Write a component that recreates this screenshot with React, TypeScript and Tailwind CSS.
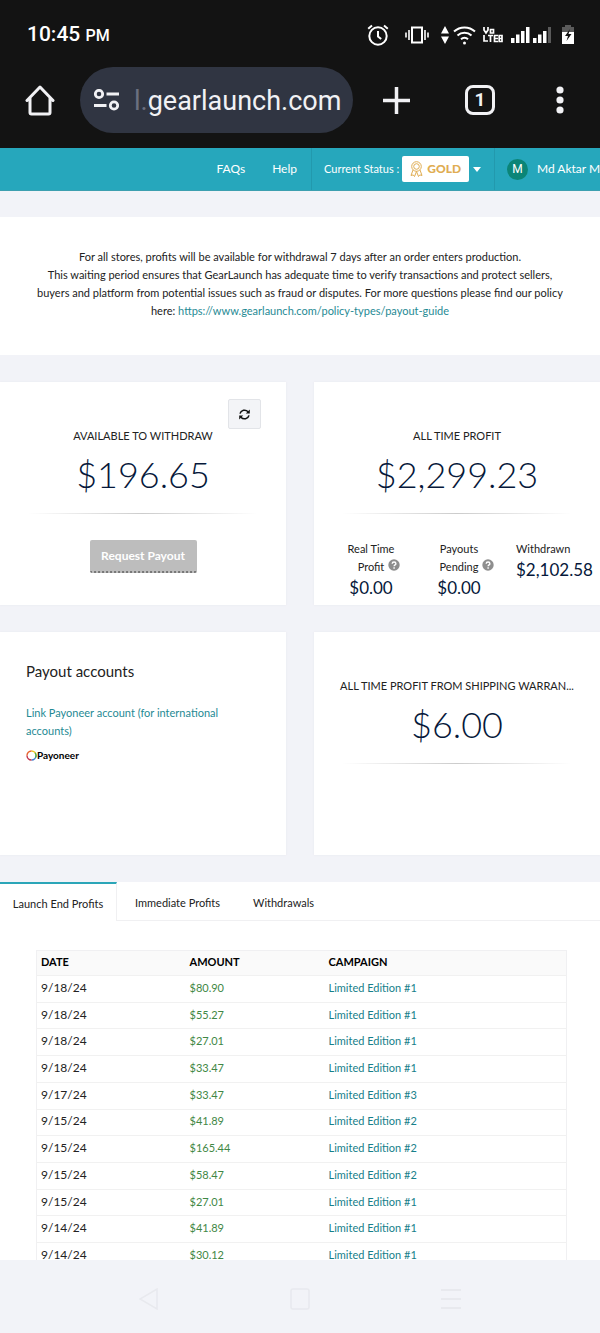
import type { ReactNode } from 'react';

const profits = [
  { date: '9/18/24', amount: '$80.90', campaign: 'Limited Edition #1' },
  { date: '9/18/24', amount: '$55.27', campaign: 'Limited Edition #1' },
  { date: '9/18/24', amount: '$27.01', campaign: 'Limited Edition #1' },
  { date: '9/18/24', amount: '$33.47', campaign: 'Limited Edition #1' },
  { date: '9/17/24', amount: '$33.47', campaign: 'Limited Edition #3' },
  { date: '9/15/24', amount: '$41.89', campaign: 'Limited Edition #2' },
  { date: '9/15/24', amount: '$165.44', campaign: 'Limited Edition #2' },
  { date: '9/15/24', amount: '$58.47', campaign: 'Limited Edition #2' },
  { date: '9/15/24', amount: '$27.01', campaign: 'Limited Edition #1' },
  { date: '9/14/24', amount: '$41.89', campaign: 'Limited Edition #1' },
  { date: '9/14/24', amount: '$30.12', campaign: 'Limited Edition #1' },
];

function StatusBar() {
  return (
    <div className="flex h-[67px] items-center justify-between pl-[27px] pr-[26px] pt-0.5 text-white">
      <p className="text-[21px] font-medium">
        10:45 <span className="text-[16px]">PM</span>
      </p>
      <div className="flex items-center">
        <svg className="mr-4" width="22" height="22" viewBox="0 0 22 22" fill="none" stroke="currentColor" strokeWidth="2">
          <circle cx="11" cy="12" r="8.7" />
          <path d="M11 7v5.5l3.2 2.5M1.2 4.8 5 1.6M20.8 4.8 17 1.6" />
        </svg>
        <svg className="mr-3" width="24" height="18" viewBox="0 0 24 18" fill="none" stroke="currentColor" strokeWidth="2">
          <rect x="7" y="1.5" width="10" height="15" />
          <path d="M4 4v10M20 4v10M1 6.500v5M23 6.500v5" strokeWidth="1.600" />
        </svg>
        <svg className="mr-1" width="8" height="18" viewBox="0 0 8 18" fill="currentColor">
          <path d="M4 0l4 7.500H0zM4 18l4-7.500H0z" />
        </svg>
        <svg className="mr-[7px]" width="23" height="20" viewBox="0 0 23 20" fill="none" stroke="currentColor" strokeWidth="2">
          <path d="M1 6.500a15.500 15.500 0 0 1 21 0M4.500 10.500a10.300 10.300 0 0 1 14 0M8 14.200a5.200 5.200 0 0 1 7 0" />
          <circle cx="11.500" cy="18" r="1.500" fill="currentColor" stroke="none" />
        </svg>
        <svg className="mr-2" width="20" height="17" viewBox="0 0 20 17" fill="none" stroke="currentColor" strokeWidth="1.700">
          <path d="M1 1v3l2 3 2-3V1M7.500 3.500h3v3.500h-3zM1 9v6h4M5 9.500h5M7.500 9.500V16M15 9.500h-3.500v6H15M11.500 12.500H15M16.200 9.500H19v6h-2.800zM16.200 12.500H19" />
        </svg>
        <svg className="mr-[11px]" width="40" height="18" viewBox="0 0 40 18" fill="currentColor">
          <path d="M0 12h3.500v5H0zM5 8.500h3.500V17H5zM10 5h3.500v12H10zM15 1h3.500v16H15zM22 12h3.500v5H22zM27 8.500h3.500V17H27zM32 5h3.500v12H32z" />
          <path d="M37 1h3v16h-3z" fill="#5a5a5a" />
        </svg>
        <svg width="12" height="19" viewBox="0 0 12 19">
          <path d="M3 0h6v2h3v6H0V2h3z" fill="#5a5a5a" />
          <path d="M0 7h12v12H0z" fill="#fff" />
          <path d="M8 4 3 11h3l-1.500 5L9.500 9h-3z" fill="#131313" />
        </svg>
      </div>
    </div>
  );
}

function BrowserToolbar() {
  return (
    <div className="flex items-center pb-[15px] pl-[25px] text-[#f1f1f4]">
      <button type="button" aria-label="Home" className="mr-[25px]">
        <svg width="30" height="32" viewBox="0 0 30 32" fill="none" stroke="currentColor" strokeWidth="3" strokeLinejoin="round" strokeLinecap="round">
          <path d="M2 16.500 15 3l13 13.500M5 14v14.500q0 1.500 1.500 1.500h17q1.500 0 1.500-1.500V14" />
        </svg>
      </button>
      <div className="flex h-[66px] min-w-0 flex-1 items-center rounded-full bg-[#303542] pl-[14px]">
        <svg className="mr-[15px] shrink-0" width="25" height="22" viewBox="0 0 25 22" fill="none" stroke="currentColor" strokeWidth="2.800">
          <circle cx="5" cy="5" r="3.700" />
          <circle cx="20" cy="16.500" r="3.700" />
          <path d="M12.500 5H25M0 16.500h12.500" />
        </svg>
        <p className="whitespace-nowrap pt-0.5 text-[27px]">
          <span className="text-[#6b7080]">l.</span>gearlaunch.com
        </p>
      </div>
      <button type="button" aria-label="New tab" className="flex w-[87px] justify-center">
        <svg width="27" height="27" viewBox="0 0 27 27" stroke="currentColor" strokeWidth="3.500">
          <path d="M13.500 0v27M0 13.500h27" />
        </svg>
      </button>
      <button type="button" aria-label="Tabs" className="flex w-20 justify-center">
        <span className="flex size-[30px] items-center justify-center rounded-lg border-3 border-current text-[19px] font-bold">
          1
        </span>
      </button>
      <button type="button" aria-label="Menu" className="flex w-20 justify-center">
        <svg width="8" height="28" viewBox="0 0 8 28" fill="currentColor">
          <circle cx="4" cy="4" r="3.600" />
          <circle cx="4" cy="14" r="3.600" />
          <circle cx="4" cy="24" r="3.600" />
        </svg>
      </button>
    </div>
  );
}

function SiteHeader() {
  return (
    <header className="flex h-[43px] items-center justify-end overflow-hidden whitespace-nowrap border-b border-[#3d9fb0] bg-[#26a7bc] text-[12px] text-white">
      <a href="#faqs" className="mr-[27px]">FAQs</a>
      <a href="#help" className="mr-[14px]">Help</a>
      <button type="button" className="flex h-full w-[184px] items-center border-x border-[#2299ad] pl-3 text-[11px]">
        Current Status :
        <span className="ml-[3px] flex h-[26px] w-[67px] items-center justify-center gap-1 rounded-xs bg-white text-[12px] font-black text-[#e0ad52]">
          <svg width="13" height="16" viewBox="0 0 13 16" fill="none" stroke="currentColor">
            <circle cx="6.500" cy="5.500" r="4.800" />
            <circle cx="6.500" cy="5.500" r="2.800" />
            <path d="M3 9 1 14.500l2.200-.6L4.500 15.500 6.500 10.500l2 5 1.300-1.600 2.200.6L10 9" />
          </svg>
          GOLD
        </span>
        <svg className="ml-1" width="8" height="5" viewBox="0 0 8 5" fill="currentColor">
          <path d="M0 0h8L4 5z" />
        </svg>
      </button>
      <div className="flex w-[105px] items-center pl-3">
        <span className="mr-[9px] flex size-[21px] shrink-0 items-center justify-center rounded-full bg-[#0b8577] font-['Roboto',sans-serif]">
          M
        </span>
        Md Aktar M
      </div>
    </header>
  );
}

function Card({ children }: { children: ReactNode }) {
  return <section className="relative h-[223px] min-w-0 bg-white shadow-[0_0_2px_#e6e8ee]">{children}</section>;
}

function Total({ label, value }: { label: string; value: string }) {
  return (
    <div className="px-6 pt-[45px] text-center">
      <h2 className="truncate text-[11px] leading-[18px] text-[#222]">{label}</h2>
      <p className="mt-[5px] text-[36px] font-light leading-[48px] text-[#06183a]">{value}</p>
      <div className="mx-1 mt-[15px] h-px bg-linear-to-r from-transparent via-[#ccc] to-transparent" />
    </div>
  );
}

function HelpIcon() {
  return (
    <svg className="ml-1 inline align-baseline" width="12" height="12" viewBox="0 0 12 12">
      <circle cx="6" cy="6" r="5.700" fill="#8e8e8e" />
      <path d="M4.200 4.700C4.200 2.500 7.900 2.500 7.900 4.700 7.900 6 6.100 5.900 6.100 7.300M6.100 8.300v1.400" fill="none" stroke="#fff" strokeWidth="1.400" />
    </svg>
  );
}

function Stat({ first, second, value }: { first: string; second: string; value: string }) {
  return (
    <div className="w-22 text-center">
      <p>{first}</p>
      <p className="h-[18px] whitespace-nowrap pl-4">
        {second}
        <HelpIcon />
      </p>
      <p className="text-[17px] leading-6 text-[#06183a]">{value}</p>
    </div>
  );
}

function PayoneerLogo() {
  return (
    <p className="mt-[7px] flex items-center text-[10px] font-bold leading-4 text-black">
      <svg width="11" height="11" viewBox="0 0 11 11" fill="none" strokeWidth="1.400">
        <path d="M5.500 1A4.500 4.500 0 0 1 10 5.500" stroke="#e8c51c" />
        <path d="M10 5.500A4.500 4.500 0 0 1 5.500 10" stroke="#3f7fd0" />
        <path d="M5.500 10A4.500 4.500 0 0 1 1 5.500" stroke="#c0304a" />
        <path d="M1 5.500A4.500 4.500 0 0 1 5.500 1" stroke="#e8622c" />
        <path d="M9.100 2.800A4.500 4.500 0 0 1 9.400 7.700" stroke="#56b04a" />
      </svg>
      Payoneer
    </p>
  );
}

function Tabs() {
  return (
    <div role="tablist" className="flex h-[39px] text-[#222]">
      <button type="button" role="tab" aria-selected="true" className="w-[117px] border-r border-t-2 border-r-[#f0f0f2] border-t-[#2ba6b8] pt-0.5">
        Launch End Profits
      </button>
      <div className="flex flex-1 border-b border-[#f0f0f2] pl-px pt-1">
        <button type="button" role="tab" aria-selected="false" className="px-[17px]">
          Immediate Profits
        </button>
        <button type="button" role="tab" aria-selected="false" className="px-4">
          Withdrawals
        </button>
      </div>
    </div>
  );
}

function ProfitTable() {
  return (
    <table className="h-[320px] w-full border border-[#f0f0f2] text-left">
      <thead className="h-[25px] bg-[#fafafa] text-[11px] text-black">
        <tr className="h-[25px]">
          <th className="w-[149px] px-1 pb-[3px]">DATE</th>
          <th className="w-[139px] px-1 pb-[3px]">AMOUNT</th>
          <th className="px-1 pb-[3px]">CAMPAIGN</th>
        </tr>
      </thead>
      <tbody>
        {profits.map((p, i) => (
          <tr key={i} className="border-t border-[#f1f1f1]">
            <td className="px-1 pb-0.5 text-[12px] text-[#222]">{p.date}</td>
            <td className="px-1 pb-0.5 text-[#3f8745]">{p.amount}</td>
            <td className="px-1 pb-0.5">
              <a href="#campaign" className="text-[#16808a]">{p.campaign}</a>
            </td>
          </tr>
        ))}
      </tbody>
    </table>
  );
}

function SystemNav() {
  return (
    <nav className="flex h-[73px] shrink-0 items-center justify-center gap-[130px] pt-1 text-[#e8e9ee]">
      <button type="button" aria-label="Back">
        <svg width="20" height="22" viewBox="0 0 20 22" fill="none" stroke="currentColor" strokeWidth="1.500">
          <path d="M18 1v20L1 11z" />
        </svg>
      </button>
      <button type="button" aria-label="Home screen">
        <svg width="22" height="22" viewBox="0 0 22 22" fill="none" stroke="currentColor" strokeWidth="1.500">
          <rect x="2" y="1" width="18" height="20" rx="2" />
        </svg>
      </button>
      <button type="button" aria-label="Recent apps">
        <svg width="20" height="22" viewBox="0 0 20 22" stroke="currentColor" strokeWidth="2">
          <path d="M0 2h20M0 11h20M0 20h20" />
        </svg>
      </button>
    </nav>
  );
}

export default function App() {
  return (
    <div className="flex h-screen flex-col overflow-hidden bg-[#f2f3f8]">
      <div className="shrink-0 bg-[#131313] font-['Roboto',sans-serif]">
        <StatusBar />
        <BrowserToolbar />
      </div>
      <div className="min-h-0 flex-1 overflow-hidden font-['Lato',sans-serif] text-[11px] leading-[18px] text-[#222]">
        <SiteHeader />
        <main>
          <section className="mt-[26px] bg-white px-[33px] pb-[35px] pt-[31px] text-center">
            <p>
              For all stores, profits will be available for withdrawal 7 days after an order enters production.
              <br />
              This waiting period ensures that GearLaunch has adequate time to verify transactions and protect sellers,
              buyers and platform from potential issues such as fraud or disputes. For more questions please find our
              policy here:{' '}
              <a href="#payout-guide" className="text-[#1f8a94]">
                https://www.gearlaunch.com/policy-types/payout-guide
              </a>
            </p>
          </section>

          <div className="my-[27px] grid grid-cols-2 gap-x-7 gap-y-[27px]">
            <Card>
              <button
                type="button"
                aria-label="Refresh"
                className="absolute right-[25px] top-[17px] flex h-[30px] w-[33px] items-center justify-center rounded-xs border border-[#e2e4e8] bg-[#f3f4f7]"
              >
                <svg width="11" height="11" viewBox="0 0 11 11" fill="none" stroke="#111" strokeWidth="1.500">
                  <path d="M1 4.700A4.600 4.600 0 0 1 9 2.800M10 6.300A4.600 4.600 0 0 1 2 8.200" />
                  <path d="M10.800.5v4H6.800zM.2 10.500v-4h4z" fill="#111" stroke="none" />
                </svg>
              </button>
              <Total label="AVAILABLE TO WITHDRAW" value="$196.65" />
              <div className="mt-[26px] text-center">
                <button
                  type="button"
                  className="h-[33px] w-[107px] rounded-xs border-b-2 border-dotted border-[#777] bg-[#bdbdbd] text-[12px] font-bold text-white"
                >
                  Request Payout
                </button>
              </div>
            </Card>
            <Card>
              <Total label="ALL TIME PROFIT" value="$2,299.23" />
              <div className="mt-[26px] flex pl-[13px]">
                <Stat first="Real Time" second="Profit" value="$0.00" />
                <Stat first="Payouts" second="Pending" value="$0.00" />
                <div className="pl-[13px]">
                  <p>Withdrawn</p>
                  <p className="text-[17px] leading-6 text-[#06183a]">$2,102.58</p>
                </div>
              </div>
            </Card>
            <Card>
              <div className="px-[26px] pt-7">
                <h2 className="text-[15px] leading-[22px]">Payout accounts</h2>
                <a href="#payoneer" className="mt-[22px] block text-[#1f8a94]">
                  Link Payoneer account (for international accounts)
                </a>
                <PayoneerLogo />
              </div>
            </Card>
            <Card>
              <Total label="ALL TIME PROFIT FROM SHIPPING WARRAN..." value="$6.00" />
            </Card>
          </div>

          <section className="bg-white">
            <Tabs />
            <div className="pb-7 pl-9 pr-[33px] pt-[29px]">
              <ProfitTable />
            </div>
          </section>
        </main>
      </div>
      <SystemNav />
    </div>
  );
}
